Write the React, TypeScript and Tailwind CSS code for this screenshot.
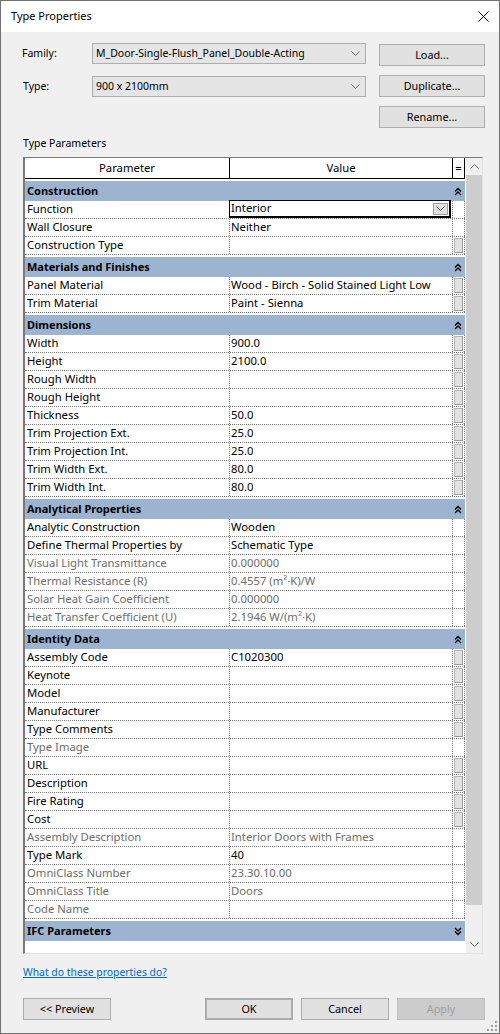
import React from 'react'

interface ParamRow {
  n: string
  v?: string
  grey?: boolean
  btn?: boolean
  combo?: boolean
}

interface Group {
  title: string
  rows: ParamRow[]
  collapsed?: boolean
}

const dims = (n: string, v: string): ParamRow => ({ n, v, btn: true })

const groups: Group[] = [
  {
    title: 'Construction',
    rows: [
      { n: 'Function', v: 'Interior', combo: true },
      { n: 'Wall Closure', v: 'Neither' },
      { n: 'Construction Type', v: '', btn: true },
    ],
  },
  {
    title: 'Materials and Finishes',
    rows: [
      { n: 'Panel Material', v: 'Wood - Birch - Solid Stained Light Low', btn: true },
      { n: 'Trim Material', v: 'Paint - Sienna', btn: true },
    ],
  },
  {
    title: 'Dimensions',
    rows: [
      dims('Width', '900.0'),
      dims('Height', '2100.0'),
      dims('Rough Width', ''),
      dims('Rough Height', ''),
      dims('Thickness', '50.0'),
      dims('Trim Projection Ext.', '25.0'),
      dims('Trim Projection Int.', '25.0'),
      dims('Trim Width Ext.', '80.0'),
      dims('Trim Width Int.', '80.0'),
    ],
  },
  {
    title: 'Analytical Properties',
    rows: [
      { n: 'Analytic Construction', v: 'Wooden' },
      { n: 'Define Thermal Properties by', v: 'Schematic Type' },
      { n: 'Visual Light Transmittance', v: '0.000000', grey: true },
      { n: 'Thermal Resistance (R)', v: '0.4557 (m²·K)/W', grey: true },
      { n: 'Solar Heat Gain Coefficient', v: '0.000000', grey: true },
      { n: 'Heat Transfer Coefficient (U)', v: '2.1946 W/(m²·K)', grey: true },
    ],
  },
  {
    title: 'Identity Data',
    rows: [
      { n: 'Assembly Code', v: 'C1020300', btn: true },
      { n: 'Keynote', btn: true },
      { n: 'Model', btn: true },
      { n: 'Manufacturer', btn: true },
      { n: 'Type Comments', btn: true },
      { n: 'Type Image', grey: true },
      { n: 'URL', btn: true },
      { n: 'Description', btn: true },
      { n: 'Fire Rating', btn: true },
      { n: 'Cost', btn: true },
      { n: 'Assembly Description', v: 'Interior Doors with Frames', grey: true },
      { n: 'Type Mark', v: '40' },
      { n: 'OmniClass Number', v: '23.30.10.00', grey: true },
      { n: 'OmniClass Title', v: 'Doors', grey: true },
      { n: 'Code Name', grey: true },
    ],
  },
  { title: 'IFC Parameters', rows: [], collapsed: true },
]

const Chevron = ({ up = false, color = '#606060' }: { up?: boolean; color?: string }) => (
  <svg width="9" height="5" viewBox="0 0 9 5">
    <path d={up ? 'M0.5 4.5 L4.5 0.5 L8.5 4.5' : 'M0.5 0.5 L4.5 4.5 L8.5 0.5'} fill="none" stroke={color} strokeWidth="1" />
  </svg>
)

const DoubleChevron = ({ up }: { up: boolean }) => (
  <svg width="8" height="9" viewBox="0 0 8 9">
    <path
      d={up ? 'M1 4.5 L4 1.5 L7 4.5 M1 8 L4 5 L7 8' : 'M1 1 L4 4 L7 1 M1 4.5 L4 7.5 L7 4.5'}
      fill="none"
      stroke="#000"
      strokeWidth="1.3"
    />
  </svg>
)

function Button({ label, className = '' }: { label: string; className?: string }) {
  return (
    <div
      className={`h-[22px] flex items-center justify-center bg-[#e1e1e1] border border-[#adadad] text-[10.8px] text-black ${className}`}
    >
      {label}
    </div>
  )
}

function Combo({ value }: { value: string }) {
  return (
    <div className="flex-1 h-[21px] flex items-center bg-[#e5e5e5] border border-[#adadad] pl-[3px] pr-[5px]">
      <span className="flex-1 text-[10.5px] text-black whitespace-nowrap overflow-hidden">{value}</span>
      <Chevron />
    </div>
  )
}

function EqButton() {
  return <div className="w-[9px] h-[15px] bg-[#e1e1e1] border border-[#b4b4b4] border-r-[#9a9a9a] border-b-[#9a9a9a]" />
}

function DataRow({ row }: { row: ParamRow }) {
  const tc = row.grey ? 'text-[#6d6d6d]' : 'text-black'
  return (
    <div className="flex h-[18px] border-b border-dotted border-[#7a7a7a]">
      <div className={`w-[205px] pl-[2px] border-r border-dotted border-[#7a7a7a] flex items-center whitespace-nowrap overflow-hidden ${tc}`}>
        {row.n}
      </div>
      <div className="w-[223px] border-r border-dotted border-[#7a7a7a] flex items-center">
        {row.combo ? (
          <div className="h-[18px] w-full -mt-[1px] -ml-[1px] flex items-center bg-white border border-black border-r-2 border-b-2 pl-[1px] pr-[1px]">
            <span className="flex-1 text-black">{row.v}</span>
            <div className="w-[15px] h-[12px] flex items-center justify-center bg-[#e1e1e1] border border-[#a0a0a0]">
              <Chevron />
            </div>
          </div>
        ) : (
          <span className={`pl-[1px] whitespace-nowrap overflow-hidden ${tc}`}>{row.v}</span>
        )}
      </div>
      <div className="w-[12px] border-r border-dotted border-[#7a7a7a] flex items-center justify-center">
        {row.btn && <EqButton />}
      </div>
    </div>
  )
}

function GroupBlock({ group }: { group: Group }) {
  return (
    <div>
      <div className="pt-[2px] bg-white">
        <div className="h-[20px] bg-[#9db4d1] flex items-center pl-[2px] font-bold text-[11px] text-black">
          <span className="flex-1">{group.title}</span>
          <span className="w-[12px] flex justify-center mr-[1px]">
            <DoubleChevron up={!group.collapsed} />
          </span>
        </div>
      </div>
      {group.rows.map((r) => (
        <DataRow key={r.n} row={r} />
      ))}
    </div>
  )
}

function ResizeGrip() {
  const dots = [
    [8, 0],
    [4, 4],
    [8, 4],
    [0, 8],
    [4, 8],
    [8, 8],
  ]
  return (
    <div className="absolute right-[2px] bottom-[2px] w-[10px] h-[10px]">
      {dots.map(([x, y]) => (
        <div key={`${x}-${y}`} className="absolute w-[2px] h-[2px] bg-[#a0a0a0]" style={{ left: x, top: y }} />
      ))}
    </div>
  )
}

export default function App() {
  return (
    <div
      className="relative w-[500px] h-[1034px] border border-[#707070] bg-[#f0f0f0] text-[10.8px] text-black overflow-hidden"
      style={{ fontFamily: '"Noto Sans", "Open Sans", sans-serif' }}
    >
      {/* title bar */}
      <div className="h-[31px] bg-white flex items-center pl-[10px] pr-[10px]">
        <span className="flex-1 text-[11px]">Type Properties</span>
        <svg width="11" height="11" viewBox="0 0 11 11">
          <path d="M0.5 0.5 L10.5 10.5 M10.5 0.5 L0.5 10.5" stroke="#000" strokeWidth="1" />
        </svg>
      </div>

      <div className="pl-[21px] pr-[14px] pt-[11px]">
        <div className="flex">
          <div className="w-[344px] flex flex-col gap-[12px]">
            <div className="flex items-center">
              <span className="w-[70px] text-[10.5px]">Family:</span>
              <Combo value="M_Door-Single-Flush_Panel_Double-Acting" />
            </div>
            <div className="flex items-center">
              <span className="w-[70px] pl-[1px] text-[10.5px]">Type:</span>
              <Combo value="900 x 2100mm" />
            </div>
          </div>
          <div className="ml-auto w-[106px] mt-[1px] flex flex-col gap-[9px]">
            <Button label="Load..." />
            <Button label="Duplicate..." />
            <Button label="Rename..." />
          </div>
        </div>

        <div className="mt-[7px] h-[16px] leading-[16px] pl-[1px] text-[10.5px]">Type Parameters</div>

        {/* parameter grid */}
        <div className="mt-[6px] ml-[1px] w-[460px] h-[797px] flex border-l-2 border-t border-[#7a7a7a] border-r border-r-[#e3e3e3] border-b border-b-[#e3e3e3] bg-white text-[11.3px]">
          <div className="w-[440px] flex flex-col">
            <div className="flex h-[21px] border-b border-black">
              <div className="w-[205px] border-r border-black flex items-center justify-center">Parameter</div>
              <div className="w-[223px] border-r border-black flex items-center justify-center">Value</div>
              <div className="w-[12px] border-r border-black flex items-center justify-center">=</div>
            </div>
            {groups.map((g) => (
              <GroupBlock key={g.title} group={g} />
            ))}
          </div>
          <div className="w-[1px]" />
          <div className="w-[16px] flex flex-col bg-[#f0f0f0]">
            <div className="h-[17px] flex items-center justify-center">
              <Chevron up />
            </div>
            <div className="h-[730px] bg-[#cdcdcd]" />
            <div className="flex-1" />
            <div className="h-[17px] flex items-center justify-center">
              <Chevron />
            </div>
          </div>
        </div>

        <div className="mt-[10px] h-[16px] leading-[16px] pl-[1px] text-[10.4px]">
          <span className="text-[#0066cc] underline">What do these properties do?</span>
        </div>

        <div className="mt-[18px] flex">
          <Button label="<< Preview" className="w-[88px] ml-[1px]" />
          <div className="ml-auto flex gap-[8px]">
            <Button label="OK" className="w-[88px] border-2 border-[#0078d7]" />
            <Button label="Cancel" className="w-[88px]" />
            <div className="w-[88px] h-[22px] flex items-center justify-center bg-[#cccccc] border border-[#bfbfbf] text-[#a0a0a0]">
              Apply
            </div>
          </div>
        </div>
      </div>
      <ResizeGrip />
    </div>
  )
}
